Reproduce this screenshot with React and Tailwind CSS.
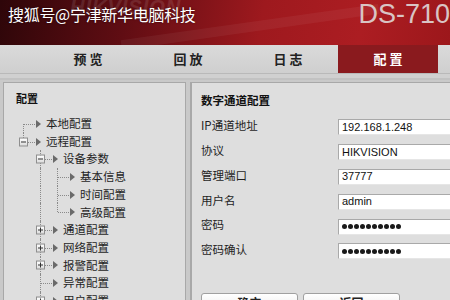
import React from "react";

const CJK = "font-['Noto_Sans_CJK_SC','Noto_Sans',sans-serif]";

function Arrow() {
  return (
    <span className="inline-block w-0 h-0 border-y-[4px] border-y-transparent border-l-[5px] border-l-[#6a6a6a]" />
  );
}

function Box({ plus }) {
  return (
    <span className="absolute left-[4px] top-1/2 -translate-y-1/2 w-[9px] h-[9px] border border-[#8f8f8f] bg-[linear-gradient(#ffffff,#dcdcdc)] flex items-center justify-center z-10">
      <span className="absolute w-[5px] h-[1px] bg-[#333]" />
      {plus && <span className="absolute w-[1px] h-[5px] bg-[#333]" />}
    </span>
  );
}

function Guide({ line }) {
  return (
    <span className="relative w-[17px] h-full shrink-0">
      {line && <span className="absolute left-[8px] top-0 bottom-0 border-l border-dotted border-[#8a8a8a]" />}
    </span>
  );
}

function Connector({ vert, box }) {
  return (
    <span className="relative w-[17px] h-full shrink-0">
      {vert === "full" && <span className="absolute left-[8px] top-0 bottom-0 border-l border-dotted border-[#8a8a8a]" />}
      {vert === "top" && <span className="absolute left-[8px] top-0 h-1/2 border-l border-dotted border-[#8a8a8a]" />}
      {vert === "bottom" && <span className="absolute left-[8px] top-1/2 bottom-0 border-l border-dotted border-[#8a8a8a]" />}
      <span className="absolute left-[9px] right-[-3px] top-1/2 border-t border-dotted border-[#8a8a8a]" />
      {box && <Box plus={box === "plus"} />}
    </span>
  );
}

function Row({ guides, vert, box, label }) {
  return (
    <div className="flex items-center h-[17.7px] pl-[11px]">
      {guides.map((g, i) => (
        <Guide key={i} line={g} />
      ))}
      <Connector vert={vert} box={box} />
      <span className="w-[14px] shrink-0 flex items-center pl-[4px]">
        <Arrow />
      </span>
      <span className="text-[11.5px] text-[#1e1e1e] leading-none whitespace-nowrap">{label}</span>
    </div>
  );
}

function Field({ label, value, password }) {
  return (
    <div className="flex items-center h-[24.8px]">
      <span className="w-[137px] shrink-0 text-[11.5px] text-[#1e1e1e] -mt-[3px] leading-none">{label}</span>
      <div className="flex-1 h-[16px] bg-white border border-[#a9a9a9] border-r-0 border-b-[#e6e6e6] flex items-center pl-[3px]">
        {password ? (
          <span className="flex gap-[1.5px]">
            {Array.from({ length: 10 }).map((_, i) => (
              <span key={i} className="w-[4.5px] h-[4.5px] rounded-full bg-[#1a1a1a]" />
            ))}
          </span>
        ) : (
          <span className="font-['Liberation_Sans',Arial,sans-serif] text-[11px] text-[#111] leading-none">{value}</span>
        )}
      </div>
    </div>
  );
}

export default function App() {
  return (
    <div className={`w-[450px] h-[300px] overflow-hidden bg-[#c9c9c9] ${CJK}`}>
      {/* header */}
      <div className="relative h-[45px] bg-[linear-gradient(100deg,#2e0609_0%,#600d13_28%,#9e191e_58%,#ac1d22_80%,#9c171b_100%)] flex items-start justify-between overflow-hidden">
        <span className="absolute left-[70px] top-[-8px] font-['Liberation_Sans',Arial,sans-serif] italic font-bold text-[20px] text-[#ffffff] opacity-[0.1] tracking-[1px]">HIKVISION</span>
        <span className="absolute left-[120px] top-[22px] w-[260px] h-[10px] bg-[#ffffff] opacity-[0.05] -rotate-[8deg]" />
        <span className="relative pl-[8px] pt-[4px] text-[16px] text-white leading-[20px] tracking-[-0.3px] [text-shadow:0_0_2px_rgba(0,0,0,0.6)]">
          搜狐号@宁津新华电脑科技
        </span>
        <span className="relative pt-[0px] font-['Liberation_Sans',Arial,sans-serif] text-[27px] text-[#d9c4c4] leading-[28px] whitespace-nowrap">
          DS-710
        </span>
      </div>

      {/* nav */}
      <div className="h-[28px] bg-[linear-gradient(#dadada,#cfcfcf)] flex pl-[38px]">
        {["预 览", "回 放", "日 志"].map((t) => (
          <div key={t} className="w-[100px] flex items-center justify-center text-[13px] font-bold text-[#222] whitespace-pre">
            {t}
          </div>
        ))}
        <div className="w-[100px] flex items-center justify-center text-[13px] font-bold text-white bg-[#8a1a1e] whitespace-pre">
          配 置
        </div>
      </div>
      <div className="h-[1px] bg-[#b9b9b9]" />
      <div className="h-[4px] bg-[#d0d0d0]" />
      <div className="h-[2px] bg-[#c2c2c2]" />

      {/* content */}
      <div className="flex h-[222px] pl-[3px] pt-[2px] gap-[4px]">
        <div className="w-[183px] shrink-0 border border-[#a8a8a8] border-b-0 bg-[#dedede] overflow-hidden">
          <div className="pl-[12px] pt-[10px] h-[32px] text-[11px] font-bold text-[#111] leading-none">配置</div>
          <div>
            <Row guides={[]} vert="bottom" label="本地配置" />
            <Row guides={[]} vert="top" box="minus" label="远程配置" />
            <Row guides={[false]} vert="full" box="minus" label="设备参数" />
            <Row guides={[false, true]} vert="full" label="基本信息" />
            <Row guides={[false, true]} vert="full" label="时间配置" />
            <Row guides={[false, true]} vert="top" label="高级配置" />
            <Row guides={[false]} vert="full" box="plus" label="通道配置" />
            <Row guides={[false]} vert="full" box="plus" label="网络配置" />
            <Row guides={[false]} vert="full" box="plus" label="报警配置" />
            <Row guides={[false]} vert="full" label="异常配置" />
            <Row guides={[false]} vert="full" box="plus" label="用户配置" />
          </div>
        </div>
        <div className="flex-1 border-l-2 border-t border-[#a8a8a8] bg-[#dedede] pl-[9px] overflow-hidden">
          <div className="pt-[12px] h-[32px] text-[11.5px] font-bold text-[#111] leading-none">数字通道配置</div>
          <Field label="IP通道地址" value="192.168.1.248" />
          <Field label="协议" value="HIKVISION" />
          <Field label="管理端口" value="37777" />
          <Field label="用户名" value="admin" />
          <Field label="密码" password />
          <Field label="密码确认" password />
          <div className="flex gap-[5px] pt-[29px]">
            <div className="w-[97px] h-[20px] rounded-[3px] border border-[#a0a0a0] bg-[linear-gradient(#ffffff,#e8e8e8)] flex justify-center pt-[3px] text-[12px] font-bold text-[#222] leading-none">
              确定
            </div>
            <div className="w-[97px] h-[20px] rounded-[3px] border border-[#a0a0a0] bg-[linear-gradient(#ffffff,#e8e8e8)] flex justify-center pt-[3px] text-[12px] font-bold text-[#222] leading-none">
              返回
            </div>
          </div>
        </div>
      </div>
    </div>
  );
}
